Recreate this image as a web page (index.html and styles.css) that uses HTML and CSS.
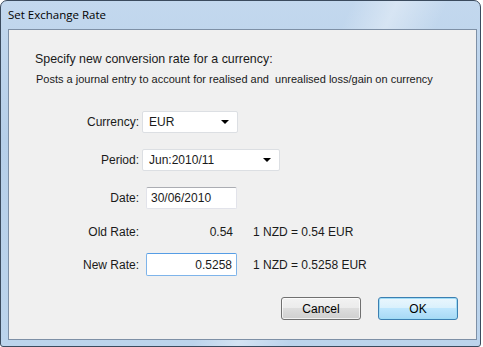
FILE: index.html
```html
<!DOCTYPE html>
<html lang="en">
<head>
  <meta charset="UTF-8" />
  <title>Set Exchange Rate</title>
  <link rel="stylesheet" href="styles.css">
</head>
<body>

  <div class="window">
    <div class="titlebar">Set Exchange Rate</div>

    <div class="client">
      <h2>Specify new conversion rate for a currency:</h2>
      <p class="hint">Posts a journal entry to account for realised and&nbsp; unrealised loss/gain on currency</p>

      <div class="row row-currency">
        <label>Currency:</label>
        <div class="combo combo-small">
          <span>EUR</span>
          <i class="arrow"></i>
        </div>
      </div>

      <div class="row row-period">
        <label>Period:</label>
        <div class="combo combo-wide">
          <span>Jun:2010/11</span>
          <i class="arrow"></i>
        </div>
      </div>

      <div class="row row-date">
        <label>Date:</label>
        <input class="field" type="text" value="30/06/2010" />
      </div>

      <div class="row row-old">
        <label>Old Rate:</label>
        <span class="value">0.54</span>
        <span class="note">1 NZD = 0.54 EUR</span>
      </div>

      <div class="row row-new">
        <label>New Rate:</label>
        <input class="field num focused" type="text" value="0.5258" />
        <span class="note">1 NZD = 0.5258 EUR</span>
      </div>

      <div class="buttons">
        <button class="btn">Cancel</button>
        <button class="btn default">OK</button>
      </div>
    </div>
  </div>

</body>
</html>
```

FILE: styles.css
```css
* {
  box-sizing: border-box;
}

body {
  margin: 0;
  background: #ffffff;
  font-family: "Liberation Sans", Arial, sans-serif;
  font-size: 11px;
  color: #1a1a1a;
}

.window {
  width: 481px;
  height: 347px;
  border: 1px solid #3b4b5e;
  border-radius: 7px 7px 3px 3px;
  background:
    linear-gradient(115deg, rgba(255,255,255,0) 55%, rgba(255,255,255,0.35) 62%, rgba(255,255,255,0) 70%),
    linear-gradient(180deg, #c3d8ee 0%, #b6cfe9 40%, #bcd4ec 100%);
  display: flex;
  flex-direction: column;
  padding: 0 3px 6px 7px;
}

.titlebar {
  height: 28px;
  padding: 6px 0 0 0;
  font-family: "Open Sans", "Liberation Sans", sans-serif;
  font-size: 11.5px;
  color: #000;
}

.client {
  flex: 1;
  background: #f0f0f0;
  border: 1px solid #7e90a6;
  padding: 20px 0 0 26px;
}

h2 {
  margin: 0;
  font-size: 12.4px;
  font-weight: normal;
  line-height: 18px;
}

.hint {
  margin: 4px 0 0 1px;
  font-size: 11px;
  line-height: 14px;
}

.row {
  display: flex;
  align-items: center;
  height: 22px;
  margin-left: -26px;
}

.row label {
  width: 130px;
  text-align: right;
  font-size: 12px;
}

.row-currency { margin-top: 25px; }
.row-period   { margin-top: 16px; }
.row-date     { margin-top: 16px; }
.row-old      { margin-top: 12px; }
.row-new      { margin-top: 10px; height: 23px; }

.combo {
  display: flex;
  align-items: center;
  justify-content: space-between;
  height: 22px;
  margin-left: 3px;
  padding: 0 8px 0 6px;
  background: #ffffff;
  border: 1px solid #dcdfe3;
  border-radius: 2px;
  font-size: 12px;
}

.combo-small { width: 96px; }
.combo-wide  { width: 138px; }

.arrow {
  width: 0;
  height: 0;
  border-left: 4px solid transparent;
  border-right: 4px solid transparent;
  border-top: 4px solid #000;
}

.field {
  width: 91px;
  height: 22px;
  margin: 0 0 0 7px;
  padding: 0 4px;
  background: #ffffff;
  border: 1px solid #e2e3ea;
  border-top-color: #abadb3;
  border-radius: 2px;
  font-family: inherit;
  font-size: 12px;
  color: #1a1a1a;
}

.field.num {
  text-align: right;
  height: 23px;
}

.field.focused {
  border-color: #7eb4ea;
  border-top-color: #569de5;
}

.value {
  width: 91px;
  margin-left: 7px;
  padding-right: 4px;
  text-align: right;
  font-size: 12px;
}

.note {
  margin-left: 16px;
  font-size: 12px;
}

.buttons {
  display: flex;
  justify-content: flex-end;
  gap: 17px;
  margin: 21px 18px 0 0;
}

.btn {
  width: 80px;
  height: 23px;
  padding: 0;
  border: 1px solid #707070;
  border-radius: 3px;
  background: linear-gradient(180deg, #f2f2f2 0%, #ebebeb 49%, #dddddd 50%, #cfcfcf 100%);
  box-shadow: inset 0 0 0 1px rgba(255,255,255,0.7);
  font-family: inherit;
  font-size: 12px;
  color: #000;
}

.btn.default {
  border-color: #3c7fb1;
  background: linear-gradient(180deg, #eaf6fd 0%, #d9f0fc 49%, #bee6fd 50%, #a7d9f5 100%);
  box-shadow: inset 0 0 0 1px #9fdcf6;
}
```
